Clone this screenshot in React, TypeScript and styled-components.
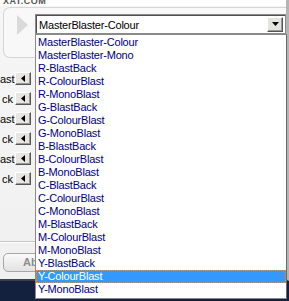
import React from "react";
import styled, { createGlobalStyle } from "styled-components";

const GlobalStyle = createGlobalStyle`
  html, body { margin: 0; padding: 0; }
  body { font-family: "Liberation Sans", Arial, sans-serif; overflow: hidden; }
`;

const presets = [
  "MasterBlaster-Colour",
  "MasterBlaster-Mono",
  "R-BlastBack",
  "R-ColourBlast",
  "R-MonoBlast",
  "G-BlastBack",
  "G-ColourBlast",
  "G-MonoBlast",
  "B-BlastBack",
  "B-ColourBlast",
  "B-MonoBlast",
  "C-BlastBack",
  "C-ColourBlast",
  "C-MonoBlast",
  "M-BlastBack",
  "M-ColourBlast",
  "M-MonoBlast",
  "Y-BlastBack",
  "Y-ColourBlast",
  "Y-MonoBlast",
];

// only the tail of each channel label peeks out from the left edge
const channels = ["ast", "ck", "ast", "ck", "ast", "ck"];

const App: React.FC = () => {
  const selected = "Y-ColourBlast";
  return (
    <Screen>
      <GlobalStyle />
      <Window>
        <TopBar>
          <Brand>XAT.COM</Brand>
        </TopBar>
        <PlayerPanel>
          <PlayIcon width="11" height="20" viewBox="0 0 11 20">
            <polygon points="0,0 11,10 0,20" fill="#dadada" />
          </PlayIcon>
          <Combo>
            <ComboText>MasterBlaster-Colour</ComboText>
            <ComboButton>
              <svg width="7" height="4" viewBox="0 0 7 4">
                <polygon points="0,0 7,0 3.5,4" fill="#000" />
              </svg>
            </ComboButton>
          </Combo>
        </PlayerPanel>
        <Rows>
          {channels.map((c, i) => (
            <Row key={i}>
              <RowLabel>{c}</RowLabel>
              <ArrowButton>
                <svg width="4" height="7" viewBox="0 0 4 7">
                  <polygon points="4,0 4,7 0,3.5" fill="#000" />
                </svg>
              </ArrowButton>
            </Row>
          ))}
        </Rows>
        <Divider />
        <AboutButton>Ab</AboutButton>
      </Window>
      <DropList>
        {presets.map((p) => (
          <DropItem key={p} $active={p === selected}>
            {p}
          </DropItem>
        ))}
      </DropList>
    </Screen>
  );
};
export default App;

const Screen = styled.div`
  position: relative;
  width: 289px;
  height: 301px;
  overflow: hidden;
  background: #13213f;
`;

const Window = styled.div`
  display: flex;
  flex-direction: column;
  box-sizing: border-box;
  width: 289px;
  height: 281px;
  background: linear-gradient(#f6f6f6, #f0f0f0);
  border-right: 3px solid #b4b4b4;
  border-bottom: 2px solid #3a3f4a;
`;

const TopBar = styled.div`
  height: 6px;
  overflow: hidden;
  background: #fff;
  padding-left: 3px;
`;

const Brand = styled.div`
  margin-top: -4px;
  font-size: 9px;
  font-weight: bold;
  line-height: 10px;
  color: #555;
  letter-spacing: 0.5px;
`;

const PlayerPanel = styled.div`
  display: flex;
  align-items: flex-start;
  gap: 7px;
  height: 51px;
  margin: 1px 0 0 3px;
  padding: 6px 0 0 13px;
  box-sizing: border-box;
  border: 1px solid #d6d6d6;
  border-right: none;
  border-radius: 7px 0 0 7px;
  background: #f8f8f8;
`;

const PlayIcon = styled.svg`
  margin-top: 1px;
  flex: none;
`;

const Combo = styled.div`
  display: flex;
  align-items: center;
  justify-content: space-between;
  box-sizing: border-box;
  width: 251px;
  height: 20px;
  padding: 0 2px 0 3px;
  background: #fff;
  border: 1px solid #8a8a8a;
  box-shadow: inset 1px 1px #505050;
`;

const ComboText = styled.span`
  font-size: 11px;
  color: #000;
  letter-spacing: -0.2px;
  padding-top: 1px;
`;

const ComboButton = styled.div`
  display: flex;
  align-items: center;
  justify-content: center;
  box-sizing: border-box;
  width: 16px;
  height: 15px;
  background: #e4e3e0;
  border: 1px solid;
  border-color: #fff #555 #555 #fff;
  box-shadow: inset -1px -1px #9a9a9a;
`;

const Rows = styled.div`
  display: flex;
  flex-direction: column;
  margin-top: 14px;
`;

const Row = styled.div`
  display: flex;
  align-items: flex-start;
  gap: 2px;
  height: 20px;
`;

const RowLabel = styled.div`
  width: 13px;
  text-align: right;
  font-size: 11px;
  line-height: 13px;
  color: #000;
  white-space: nowrap;
  padding-top: 1px;
`;

const ArrowButton = styled.div`
  display: flex;
  align-items: center;
  justify-content: center;
  box-sizing: border-box;
  width: 16px;
  height: 13px;
  background: #e6e5e2;
  border: 1px solid;
  border-color: #fff #555 #555 #fff;
  box-shadow: inset -1px -1px #9a9a9a;
`;

const Divider = styled.div`
  margin-top: 49px;
  height: 1px;
  background: #c4c4c4;
  border-bottom: 1px solid #fff;
`;

const AboutButton = styled.div`
  box-sizing: border-box;
  width: 80px;
  height: 19px;
  margin: 10px 0 0 3px;
  padding-left: 19px;
  border: 1px solid #a6a6a6;
  border-radius: 5px;
  background: linear-gradient(#fafafa, #e2e2e2);
  font-size: 11px;
  font-weight: bold;
  line-height: 17px;
  color: #8c8c8c;
`;

const DropList = styled.div`
  position: absolute;
  left: 35px;
  top: 34px;
  width: 252px;
  box-sizing: border-box;
  padding: 1px 0 2px;
  background: #fff;
  border: 1px solid #8a8a8a;
  border-right-color: #6a6a6a;
`;

const DropItem = styled.div<{ $active?: boolean }>`
  height: 13px;
  line-height: 13px;
  padding-left: 2px;
  font-size: 11px;
  letter-spacing: -0.2px;
  white-space: nowrap;
  color: ${(p) => (p.$active ? "#fff" : "#000080")};
  background: ${(p) => (p.$active ? "#3399ff" : "transparent")};
  outline: ${(p) => (p.$active ? "1px dotted #ff8a1c" : "none")};
  outline-offset: -1px;
`;
